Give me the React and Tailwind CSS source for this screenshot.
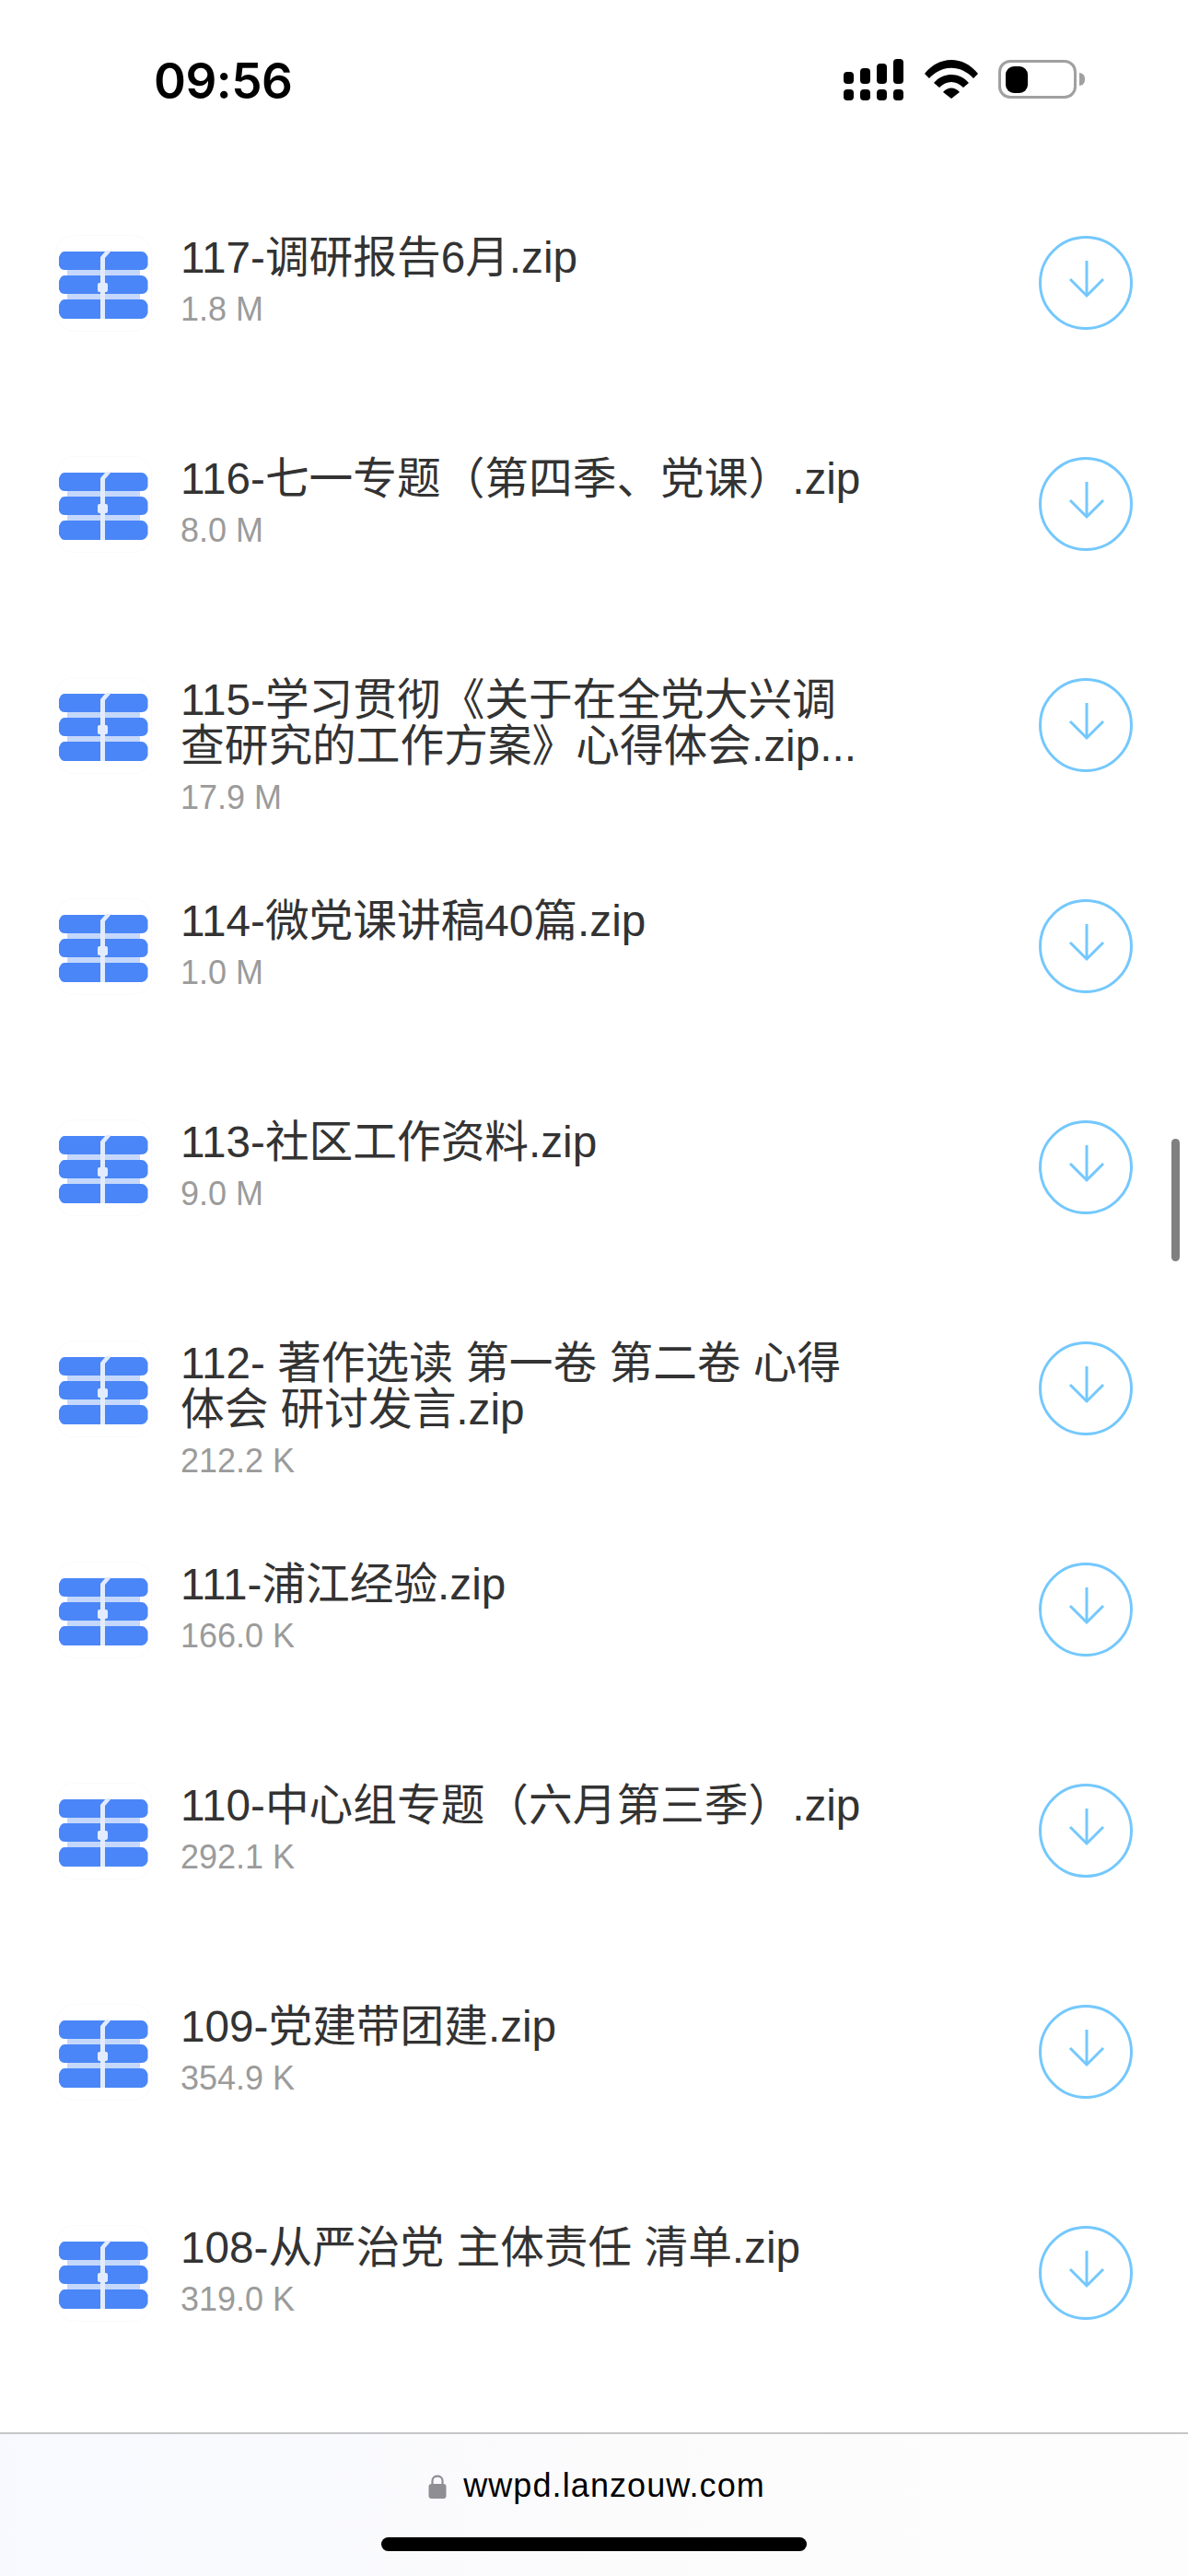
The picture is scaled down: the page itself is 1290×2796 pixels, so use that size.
const files = [
  { name: "117-调研报告6月.zip", size: "1.8 M" },
  { name: "116-七一专题（第四季、党课）.zip", size: "8.0 M" },
  { name: "115-学习贯彻《关于在全党大兴调查研究的工作方案》心得体会.zip...", size: "17.9 M" },
  { name: "114-微党课讲稿40篇.zip", size: "1.0 M" },
  { name: "113-社区工作资料.zip", size: "9.0 M" },
  { name: "112- 著作选读 第一卷 第二卷 心得体会 研讨发言.zip", size: "212.2 K" },
  { name: "111-浦江经验.zip", size: "166.0 K" },
  { name: "110-中心组专题（六月第三季）.zip", size: "292.1 K" },
  { name: "109-党建带团建.zip", size: "354.9 K" },
  { name: "108-从严治党 主体责任 清单.zip", size: "319.0 K" },
];

const ZipIcon = () => (
  <svg width="105" height="105" viewBox="0 0 105 105" className="shrink-0">
    <rect x="0.5" y="0.5" width="104" height="104" rx="20" fill="#ffffff" stroke="#fafafa" />
    <rect x="13" y="36" width="79" height="10" fill="#c5d8fb" />
    <rect x="13" y="62" width="79" height="10" fill="#c5d8fb" />
    <path d="M10 18H94Q97 18 99 21L100.500 24V33L99 36Q97 38 94 38H10Q7 38 5.500 36L4 33V24L5.500 21Q7 18 10 18Z" fill="#4a86f7" />
    <path d="M10 44H94Q97 44 99 47L100.500 50V59L99 62Q97 64 94 64H10Q7 64 5.500 62L4 59V50L5.500 47Q7 44 10 44Z" fill="#4a86f7" />
    <path d="M10 70H94Q97 70 99 73L100.500 76V85L99 88Q97 91 94 91H10Q7 91 5.500 88L4 85V76L5.500 73Q7 70 10 70Z" fill="#4a86f7" />
    <path d="M49 91V24L55 17H61L54 25V91Z" fill="#e3ecfd" />
    <rect x="46" y="52" width="11" height="10" rx="2" fill="#e3ecfd" />
  </svg>
);

const DownloadIcon = () => (
  <svg width="102" height="102" viewBox="0 0 102 102" fill="none" stroke="#74c8fd" strokeWidth="3" className="shrink-0">
    <circle cx="51" cy="51" r="49.500" />
    <path d="M52 27V65" />
    <path d="M34 47L52 65L70 47" />
  </svg>
);

const SignalIcon = () => (
  <svg width="65" height="45" viewBox="0 0 65 45" fill="#000">
    <rect x="0" y="14" width="11" height="13" rx="4" />
    <rect x="18" y="10" width="11" height="17" rx="4" />
    <rect x="36" y="5" width="11" height="22" rx="4" />
    <rect x="54" y="0" width="11" height="27" rx="4" />
    <rect x="0" y="33" width="11" height="12" rx="4" />
    <rect x="18" y="33" width="11" height="12" rx="4" />
    <rect x="36" y="33" width="11" height="12" rx="4" />
    <rect x="54" y="33" width="11" height="12" rx="4" />
  </svg>
);

const WifiIcon = () => (
  <svg width="58" height="42" viewBox="0 0 58 42" fill="#000">
    <path d="M0 15C16 -5 42 -5 58 15L53 20C39 5 19 5 5 20Z" />
    <path d="M10 25C20 13 38 13 48 25L42 30C34 22 24 22 16 30Z" />
    <path d="M20 35C25 29 33 29 38 35L29 42Z" />
  </svg>
);

const BatteryIcon = () => (
  <div className="flex items-center gap-[3px]">
    <div className="flex h-[42px] w-[85px] items-center rounded-[13px] border-[3px] border-[#a0a0a0] pl-[5px]">
      <div className="h-[29px] w-[24px] rounded-[9px] bg-black" />
    </div>
    <div className="h-[14px] w-[6px] rounded-r-full bg-[#a0a0a0]" />
  </div>
);

const LockIcon = () => (
  <svg width="20" height="27" viewBox="0 0 20 27">
    <path d="M4.500 12V7.500C4.500 1 15.500 1 15.500 7.500V12" fill="none" stroke="#8e8e93" strokeWidth="2.200" />
    <rect x="0.500" y="11" width="19" height="16" rx="3" fill="#8e8e93" />
  </svg>
);

const FileRow = ({ file }) => (
  <div className="flex h-[240px] items-center pl-[60px] pr-[60px]">
    <ZipIcon />
    <div className="ml-[31px] w-[750px] self-start pt-[68px]">
      <p className="text-[47.7px] leading-[50px] text-[#333333]">{file.name}</p>
      <p className="mt-[11px] text-[36px] leading-[40px] text-[#9b9b9b]">{file.size}</p>
    </div>
    <div className="ml-auto">
      <DownloadIcon />
    </div>
  </div>
);

export default function App() {
  return (
    <div
      lang="zh-CN"
      className="relative flex h-[2796px] w-full flex-col overflow-hidden bg-white"
      style={{ fontFamily: '"Liberation Sans", "Noto Sans CJK SC", sans-serif' }}
    >
      {/* status bar */}
      <div className="flex h-[187px] shrink-0 items-start justify-between pl-[167px] pr-[112px] pt-[60px]">
        <span className="font-['Inter',sans-serif] text-[53px] font-semibold leading-[56px] tracking-[-0.5px] text-black">09:56</span>
        <div className="mt-[4px] flex items-start">
          <SignalIcon />
          <div className="ml-[23px] mt-[1px]">
            <WifiIcon />
          </div>
          <div className="ml-[22px] mt-[1px]">
            <BatteryIcon />
          </div>
        </div>
      </div>

      {/* list */}
      <div className="flex-1">
        {files.map((file) => (
          <FileRow key={file.name} file={file} />
        ))}
      </div>

      {/* scroll indicator */}
      <div className="absolute left-[1272px] top-[1236px] h-[133px] w-[9px] rounded-full bg-[#808080]" />

      {/* safari bar */}
      <div className="flex h-[156px] shrink-0 flex-col items-center border-t-2 border-[#c6c6c8] bg-linear-to-r from-[#f8f9ff] via-[#fbfbfc] to-[#fdfdfd] pt-[36px]">
        <div className="ml-[6px] flex items-center gap-[18px]">
          <LockIcon />
          <span className="text-[36px] leading-[40px] tracking-[1.1px] text-black">wwpd.lanzouw.com</span>
        </div>
        <div className="mt-[36px] h-[15px] w-[462px] rounded-full bg-black" />
      </div>
    </div>
  );
}
